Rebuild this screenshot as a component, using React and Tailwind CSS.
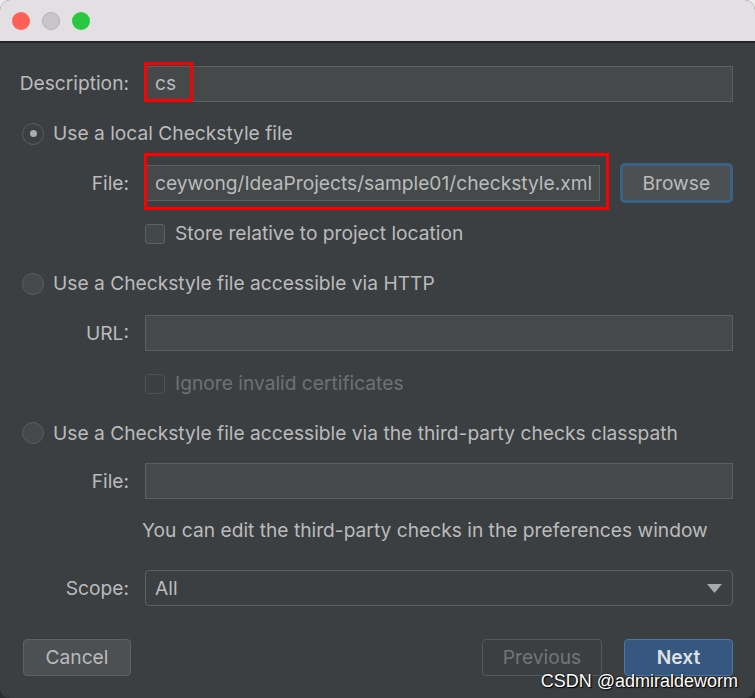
import * as React from "react";

const FONT = { fontFamily: "Inter, 'Noto Sans', sans-serif" };

function Radio({ checked }) {
  return (
    <span
      className={
        "flex h-[22px] w-[22px] shrink-0 items-center justify-center rounded-full border-[1.5px] border-[#5b5e60] " +
        (checked ? "bg-[#3c3f41]" : "bg-[#45494a]")
      }
    >
      {checked && <span className="h-[7px] w-[7px] rounded-full bg-[#a9abac]" />}
    </span>
  );
}

function Checkbox({ disabled }) {
  return (
    <span
      className={
        "h-[20px] w-[20px] shrink-0 rounded-[3px] border " +
        (disabled ? "border-[#4f5253] bg-[#3c3f41]" : "border-[#5e6163] bg-[#43494a]")
      }
    />
  );
}

function Label({ children }) {
  return <div className="w-[111px] shrink-0 text-right">{children}</div>;
}

function Field({ children, className = "" }) {
  return (
    <div
      className={
        "flex h-[36px] items-center border border-[#5d6061] bg-[#45494a] pl-[9px] text-[#bbbbbb] " + className
      }
    >
      {children}
    </div>
  );
}

export default function App() {
  return (
    <div
      className="h-[698px] w-[755px] overflow-hidden bg-linear-to-b from-[#ececec] from-50% to-[#2b2d30] to-50%"
      style={FONT}
    >
      <div className="relative flex h-full flex-col overflow-hidden rounded-[10px] bg-[#3c3f41] text-[19.2px] text-[#bbbbbb]">
        {/* title bar */}
        <div className="flex h-[43px] shrink-0 items-center gap-[12px] border-b-2 border-[#232425] bg-[#e3dfe2] pl-[12px]">
          <span className="h-[18px] w-[18px] rounded-full bg-[#fe5f57]" />
          <span className="h-[18px] w-[18px] rounded-full border border-[#b5b2b5] bg-[#c9c6c9]" />
          <span className="h-[18px] w-[18px] rounded-full bg-[#29c840]" />
        </div>

        <div className="flex flex-col pl-[18px] pr-[22px] pt-[15px]">
          {/* Description */}
          <div className="flex h-[51px] items-center gap-[16px]">
            <Label>Description:</Label>
            <div className="relative flex-1">
              <Field>cs</Field>
              <div className="absolute left-[-1px] top-[-4px] h-[40px] w-[49px] border-[3px] border-[#ff0000]" />
            </div>
          </div>

          {/* local file */}
          <div className="flex h-[49px] items-center gap-[9px] pl-[4px]">
            <Radio checked />
            <span>Use a local Checkstyle file</span>
          </div>

          <div className="flex h-[50px] items-center gap-[16px]">
            <Label>File:</Label>
            <div className="relative w-[457px]">
              <Field className="whitespace-nowrap">ceywong/IdeaProjects/sample01/checkstyle.xml</Field>
              <div className="absolute left-[-1px] top-[-12px] h-[57px] w-[465px] border-[3px] border-[#ff0000]" />
            </div>
            <button className="ml-[4px] flex h-[40px] w-[114px] items-center justify-center rounded-[5px] border-[3px] border-[#3a6286] bg-[#4c5052] text-[#bbbbbb]">
              Browse
            </button>
          </div>

          <div className="flex h-[51px] items-center gap-[10px] pl-[127px]">
            <Checkbox />
            <span>Store relative to project location</span>
          </div>

          {/* HTTP */}
          <div className="flex h-[49px] items-center gap-[9px] pl-[4px]">
            <Radio />
            <span>Use a Checkstyle file accessible via HTTP</span>
          </div>

          <div className="flex h-[50px] items-center gap-[16px]">
            <Label>URL:</Label>
            <div className="flex-1">
              <Field />
            </div>
          </div>

          <div className="flex h-[51px] items-center gap-[10px] pl-[127px]">
            <Checkbox disabled />
            <span className="text-[#6e7173]">Ignore invalid certificates</span>
          </div>

          {/* classpath */}
          <div className="flex h-[48px] items-center gap-[9px] pl-[4px]">
            <Radio />
            <span>Use a Checkstyle file accessible via the third-party checks classpath</span>
          </div>

          <div className="flex h-[48px] items-center gap-[16px]">
            <Label>File:</Label>
            <div className="flex-1">
              <Field />
            </div>
          </div>

          <div className="flex h-[50px] items-center pl-[124px]">
            You can edit the third-party checks in the preferences window
          </div>

          {/* Scope */}
          <div className="flex h-[66px] items-center gap-[16px]">
            <Label>Scope:</Label>
            <div className="flex h-[36px] flex-1 items-center justify-between rounded-[4px] border border-[#5d6061] bg-[#3c3f41] pl-[9px] pr-[10px]">
              <span>All</span>
              <svg width="15" height="9" viewBox="0 0 15 9">
                <path d="M0 0 L15 0 L7.5 9 Z" fill="#a8a9aa" />
              </svg>
            </div>
          </div>

          {/* buttons */}
          <div className="flex h-[72px] items-center pl-[5px]">
            <button className="flex h-[37px] w-[108px] items-center justify-center rounded-[4px] border border-[#5e6264] bg-[#4c5052] text-[#bbbbbb]">
              Cancel
            </button>
            <div className="flex-1" />
            <button className="flex h-[37px] w-[120px] items-center justify-center rounded-[4px] border border-[#55595b] text-[#727577]">
              Previous
            </button>
            <button className="ml-[22px] flex h-[37px] w-[109px] items-center justify-center rounded-[4px] border border-[#4d76a0] bg-[#365880] font-semibold text-[#dfe1e3]">
              Next
            </button>
          </div>
        </div>

        <div className="absolute bottom-[3px] right-[17px] text-[18px] text-white [text-shadow:0_0_2px_#000,1px_1px_1px_#000]" style={{ fontFamily: "'Liberation Sans', Arial, sans-serif" }}>
          CSDN @admiraldeworm
        </div>
      </div>
    </div>
  );
}
